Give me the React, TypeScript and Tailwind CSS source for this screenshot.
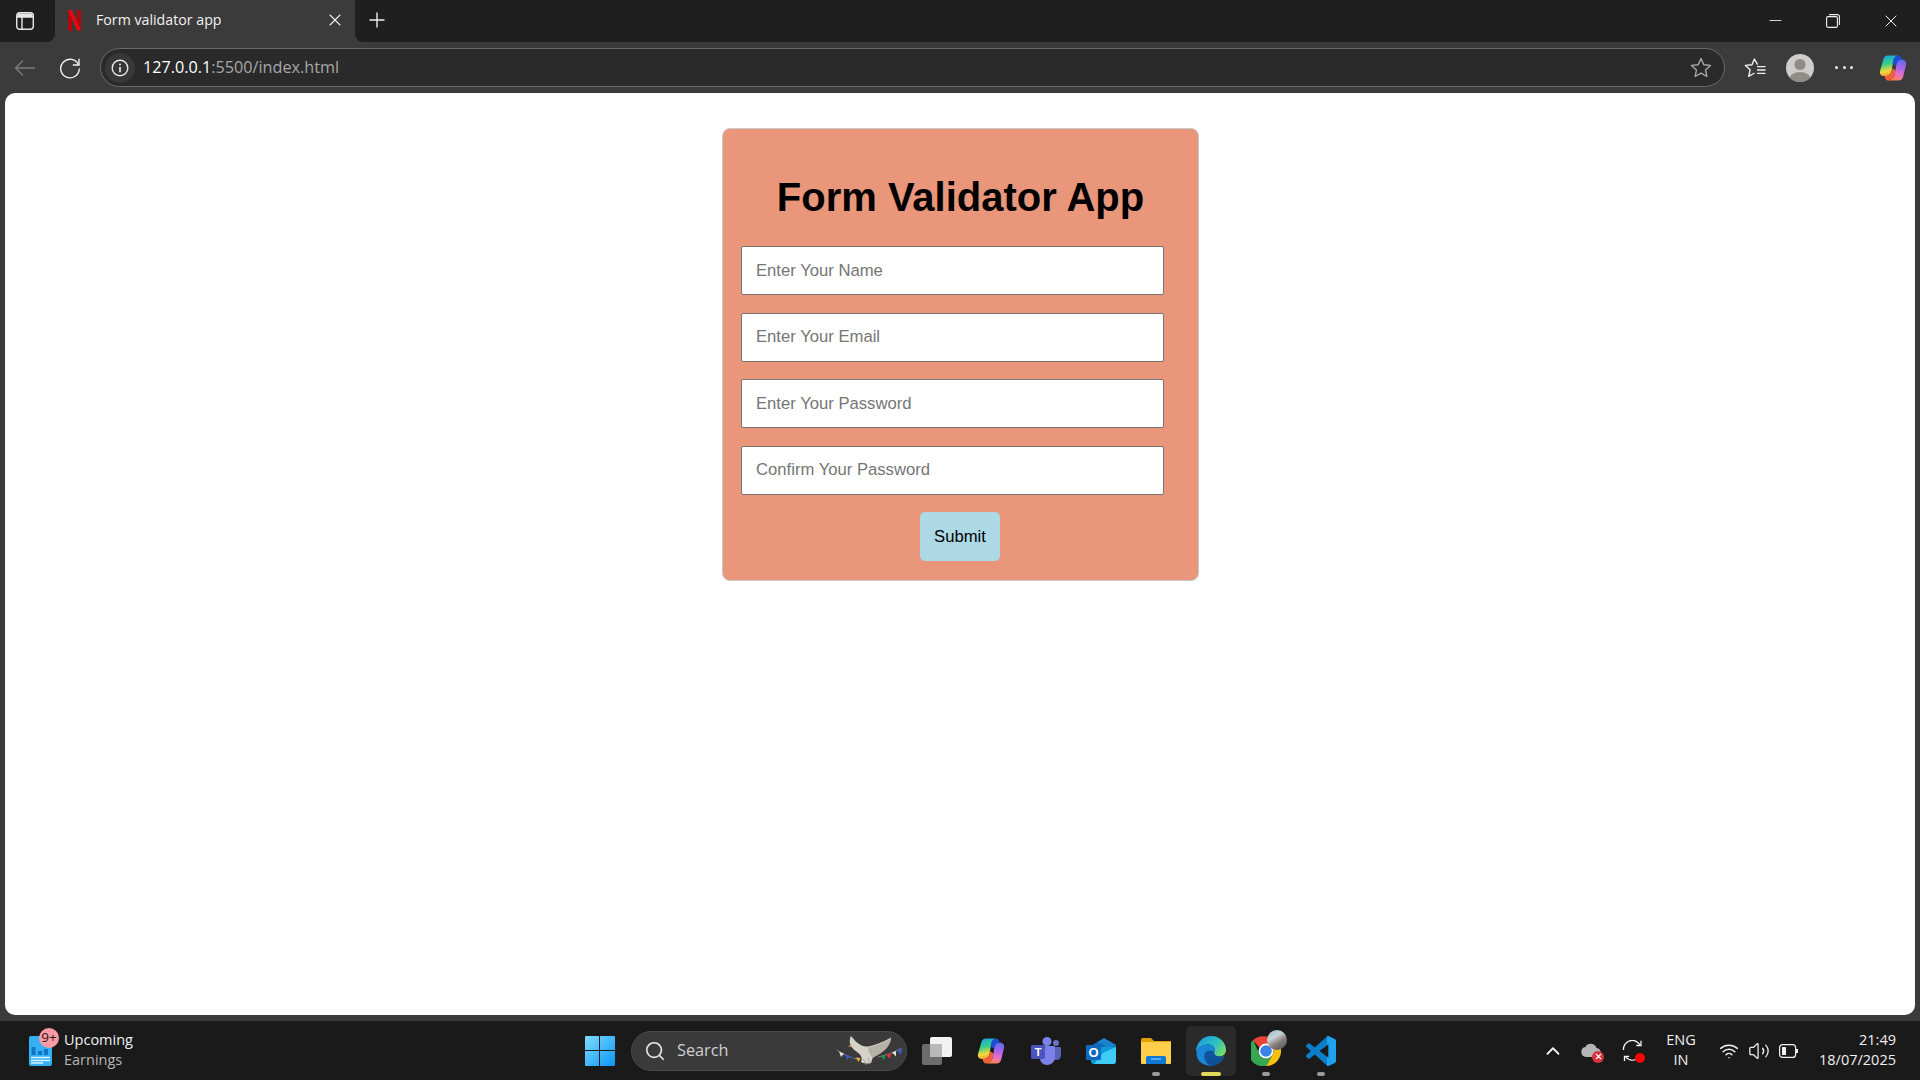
import { ChevronUp, Search, Wifi, Volume2, Plus, X, Minus } from "lucide-react";
import type { ReactNode } from "react";

const uiFont = "font-['Segoe_UI','Open_Sans','Noto_Sans',sans-serif]";

function SidebarIcon() {
    return (
        <svg width="18" height="18" viewBox="0 0 18 18" fill="none" stroke="#e8e8e8" strokeWidth="1.4">
            <rect x="0.7" y="0.7" width="16.6" height="16.6" rx="3" />
            <path d="M6 5v12.3M1 5h16" />
            <path d="M1.5 1.5h15v3.5h-15z" fill="#e8e8e8" stroke="none" />
        </svg>
    );
}

function NetflixIcon() {
    return (
        <svg width="13" height="21" viewBox="0 0 13 21">
            <path d="M0 0h4v21l-4 .0z" fill="#b20710" />
            <path d="M9 0h4v20.6l-4-.5z" fill="#b20710" />
            <path d="M0 0h4l9 20.8c-1.4-.2-2.8-.3-4-.4z" fill="#e50914" />
        </svg>
    );
}

function BackIcon() {
    return (
        <svg width="22" height="18" viewBox="0 0 22 18" fill="none" stroke="#7d7d7d" strokeWidth="1.3">
            <path d="M21 9H1.5M9 1.5 1.5 9 9 16.5" />
        </svg>
    );
}

function ReloadIcon() {
    return (
        <svg width="22" height="22" viewBox="0 0 22 22" fill="none" stroke="#f0f0f0" strokeWidth="1.4">
            <path d="M19.6 8A9.3 9.3 0 1 0 20.3 11.5" />
            <path d="M20 1.8V8h-6.2" />
        </svg>
    );
}

function InfoIcon() {
    return (
        <svg width="18" height="18" viewBox="0 0 18 18" fill="none" stroke="#e8e8e8" strokeWidth="1.4">
            <circle cx="9" cy="9" r="7.8" />
            <path d="M9 8v5.2" strokeWidth="1.7" />
            <circle cx="9" cy="5.4" r="1" fill="#e8e8e8" stroke="none" />
        </svg>
    );
}

function StarIcon() {
    return (
        <svg width="22" height="21" viewBox="0 0 22 21" fill="none" stroke="#a8a8a8" strokeWidth="1.4" strokeLinejoin="round">
            <path d="m11 1.5 2.8 6.2 6.7.7-5 4.5 1.4 6.6-5.9-3.4-5.9 3.4 1.4-6.6-5-4.5 6.7-.7z" />
        </svg>
    );
}

function FavoritesIcon() {
    return (
        <svg width="22" height="20" viewBox="0 0 22 20" fill="none" stroke="#f0f0f0" strokeWidth="1.4" strokeLinejoin="round">
            <path d="M13.6 6.6 10.4 1 8 6.7 1.4 7.4l4.7 4.4-1.4 6.6 5.8-3.4" />
            <path d="M13 8.6h8.5M13 12h8.5M13 15.4h8.5" />
        </svg>
    );
}

function ProfileIcon() {
    return (
        <svg width="28" height="28" viewBox="0 0 28 28">
            <clipPath id="profile-clip">
                <circle cx="14" cy="14" r="14" />
            </clipPath>
            <circle cx="14" cy="14" r="14" fill="#cfcdc9" />
            <g clipPath="url(#profile-clip)" fill="#8f8c88">
                <circle cx="14" cy="10.5" r="5.6" />
                <ellipse cx="14" cy="26" rx="11" ry="8" />
            </g>
        </svg>
    );
}

function CopilotIcon({ size, id }: { size: number; id: string }) {
    return (
        <svg width={size} height={size} viewBox="0 0 28 28">
            <defs>
                <linearGradient id={`${id}-a`} x1="0.3" y1="0" x2="0.5" y2="1">
                    <stop offset="0" stopColor="#1aa6e4" />
                    <stop offset="0.4" stopColor="#35d08a" />
                    <stop offset="0.75" stopColor="#f4d93a" />
                    <stop offset="1" stopColor="#f7923a" />
                </linearGradient>
                <linearGradient id={`${id}-b`} x1="0.6" y1="0" x2="0.4" y2="1">
                    <stop offset="0" stopColor="#5b6cf0" />
                    <stop offset="0.35" stopColor="#a464ec" />
                    <stop offset="0.7" stopColor="#ea70c6" />
                    <stop offset="1" stopColor="#f8844a" />
                </linearGradient>
            </defs>
            <path d="M9 1.500h10c-2.500.5-4 2.500-4.700 5L12.500 17c-.7 2.800-2 5-4.800 5H5C2 22 .3 19.800 1 17L4.300 5.500C5 3 6.500 1.500 9 1.500z" fill={`url(#${id}-a)`} />
            <path d="M9 26.500h10.500c2.500 0 4-1.500 4.700-4L27 11c.7-2.800-1-5.600-4-5.600h-1.400c-2 0-3.300 1.400-3.900 3.600L15.500 21c-.7 2.800-3 5-6.500 5.500z" fill={`url(#${id}-b)`} />
            <path d="M14.300 6.500C15 4 16.500 1.500 19 1.500c2 0 3.200 1.500 3.600 3.900h-1c-2 0-3.300 1.400-3.900 3.600l-.7 2.500-3.500-1.500z" fill="#1b4ed8" />
            <path d="M12.500 17l.8-2.800 3.100 2.400-.9 4.400c-.7 2.800-3 5-6.500 5.500-1.800 0-3-1.700-3.400-4.500h2.100c2.800 0 4.100-2.200 4.800-5z" fill="#f2603a" />
        </svg>
    );
}

function WidgetIcon() {
    return (
        <div className="relative h-[30px] w-[24px]">
            <svg width="24" height="30" viewBox="0 0 24 30" className="block">
                <rect width="23" height="30" rx="2" fill="#35b0f2" />
                <rect x="2.5" y="11" width="4" height="8" fill="#1276c8" />
                <rect x="9" y="15" width="4" height="4" fill="#1276c8" />
                <rect x="15" y="13" width="4" height="6" fill="#1276c8" />
                <path d="M2 21.5h19M2 24.5h19M2 27h12" stroke="#d9f2ff" strokeWidth="1.4" />
            </svg>
            <span className="absolute left-[10px] top-[-8px] flex h-[20px] w-[20px] items-center justify-center rounded-full bg-[#ff99a4] text-[13.5px] leading-none text-[#1a1a1a]">
                9+
            </span>
        </div>
    );
}

function WindowsLogo() {
    return (
        <svg width="30" height="30" viewBox="0 0 30 30">
            <defs>
                <linearGradient id="win-grad" x1="0" y1="0" x2="1" y2="1">
                    <stop offset="0" stopColor="#7fdcff" />
                    <stop offset="1" stopColor="#0a94f5" />
                </linearGradient>
            </defs>
            <path d="M1 0h13v14H0V1a1 1 0 0 1 1-1zM15 0h14a1 1 0 0 1 1 1v13H15zM0 15h14v15H1a1 1 0 0 1-1-1zM15 15h15v14a1 1 0 0 1-1 1H15z" fill="url(#win-grad)" />
        </svg>
    );
}

function DoveIcon() {
    return (
        <svg width="68" height="32" viewBox="0 0 68 32">
            <path d="M1 15Q14 24 24 24M42 22Q54 20 66 13" stroke="#b0b0b0" strokeWidth="0.6" fill="none" />
            <path d="M3 16.500 8 18.500 5 22z" fill="#e8dfce" />
            <path d="M9 19 14 21 11 25z" fill="#3a56c8" />
            <path d="M15 21 19 22 16.500 25.500z" fill="#3f3f80" />
            <path d="M20 22.500 24.500 23 22.500 27z" fill="#f0b429" />
            <path d="M14 8.500c-.5-3 0-6 1-7.500 2 2 3.500 4.500 6 6.500 3 2.500 7 4.500 11 4 7-1.500 15-4 23-9-.5 6-5 12-13 16.500-2 1-4 2-5 3l-2 6c-3 1-8 .5-10-1 1-2.500 1-5-1-7.500-3-3-8-5-10-10.500z" fill="#d5d2c8" />
            <path d="M32 12.500c7-1.500 15-4 23-9-.5 6-5 12-13 16.500-2 1-4 2-5 3-3-3-5-7-5-10.500z" fill="#b5b2a8" />
            <path d="M27 24c2 2 3 4 3 6M32 23c1 2 1 4 1 6" stroke="#9a978e" strokeWidth="0.8" fill="none" />
            <path d="M14.500 9.500l-2.500 2 3 .5z" fill="#e08a3c" />
            <path d="M45 21 49.500 20 48 25z" fill="#1c9c4c" />
            <path d="M50.500 19.500 55 18 54 24z" fill="#e03535" />
            <path d="M56 17.500 60 16 60 21.500z" fill="#e8dfce" />
            <path d="M61 15.500 66 13 65 20z" fill="#3a56c8" />
        </svg>
    );
}

function TaskViewIcon() {
    return (
        <svg width="30" height="28" viewBox="0 0 30 28">
            <rect x="0" y="7" width="20" height="21" rx="2" fill="#6c6c6c" />
            <rect x="8" y="0" width="22" height="20" rx="2" fill="#f2f2f2" />
            <rect x="8" y="7" width="12" height="13" fill="#b9b9b9" />
        </svg>
    );
}

function TeamsIcon() {
    return (
        <svg width="30" height="28" viewBox="0 0 30 28">
            <circle cx="25" cy="6" r="3" fill="#6c70c9" />
            <path d="M20 10h9a1 1 0 0 1 1 1v7c0 3-2 5-5 5-2 0-4-1-5-3z" fill="#5a5fb8" />
            <circle cx="16" cy="4.500" r="4.500" fill="#7b83eb" />
            <path d="M9 9h14a1 1 0 0 1 1 1v10c0 4-3 8-8 8-4 0-7-3-7-7z" fill="#7b83eb" />
            <rect x="0" y="8" width="14" height="14" rx="1.500" fill="#4b53bc" />
            <text x="7" y="19" textAnchor="middle" fontSize="11" fontWeight="700" fill="#fff" fontFamily="'Liberation Sans', sans-serif">
                T
            </text>
        </svg>
    );
}

function OutlookIcon() {
    return (
        <svg width="30" height="26" viewBox="0 0 30 26">
            <path d="M5 8 18 0l12 7v6H5z" fill="#0f6cbd" />
            <path d="M18 0l12 7-6 3L11 4z" fill="#28a8ea" opacity="0.4" />
            <path d="M5 9h25v14a3 3 0 0 1-3 3H8a3 3 0 0 1-3-3z" fill="#0f9bd8" />
            <path d="M17 15 30 9v14a3 3 0 0 1-3 3H8z" fill="#3ecbf5" />
            <rect x="0" y="7" width="15" height="15" rx="1" fill="#0e6abf" />
            <text x="7.500" y="19" textAnchor="middle" fontSize="13" fontWeight="700" fill="#fff" fontFamily="'Liberation Sans', sans-serif">
                O
            </text>
        </svg>
    );
}

function FolderIcon() {
    return (
        <svg width="30" height="26" viewBox="0 0 30 26">
            <path d="M0 2a2 2 0 0 1 2-2h8l3 3h17v6H0z" fill="#e0a100" />
            <path d="M0 4h30v21a1 1 0 0 1-1 1H1a1 1 0 0 1-1-1z" fill="#ffcf4a" />
            <path d="M5 26v-6a2 2 0 0 1 2-2h16a2 2 0 0 1 2 2v6z" fill="#0f78d4" />
            <path d="M10 21h10" stroke="#8fd0ff" strokeWidth="1.200" />
        </svg>
    );
}

function EdgeIcon() {
    return (
        <svg width="30" height="30" viewBox="0 0 30 30">
            <defs>
                <linearGradient id="edge-top" x1="0" y1="0.3" x2="1" y2="0.8">
                    <stop offset="0" stopColor="#1b9de2" />
                    <stop offset="0.55" stopColor="#2dc0c0" />
                    <stop offset="1" stopColor="#7fe05f" />
                </linearGradient>
                <linearGradient id="edge-low" x1="0" y1="0" x2="1" y2="1">
                    <stop offset="0" stopColor="#0c59a4" />
                    <stop offset="1" stopColor="#114a8b" />
                </linearGradient>
            </defs>
            <path d="M15 0C23.500 0 30 6.300 30 14c0 4-3 6.500-7 6.500-3 0-5.500-1-5.500-2.800 0-1 1.500-1.500 1.500-3.700 0-3-3-5.500-7-5.500-6 0-11.500 4-12.500 9C0 7 6.500 0 15 0z" fill="url(#edge-top)" />
            <path d="M.5 17.500C.5 11.500 6 8.500 12 8.500c4 0 7 2.500 7 5.500 0 1-.5 1.600-1 2.200-3.500-2.500-9-1.500-9.500 3-.4 3.800 2.500 8.800 8 10.400C7.500 30.500.5 25 .5 17.500z" fill="#1a86d8" />
            <path d="M8.500 19.200c.5-4.500 6-5.500 9.500-3 0 2.200 2.500 4.300 5.500 4.300 2 0 4.500-.6 5.500-2-1.300 6-6 11-13 11.500-4.500-.5-8-6-7.500-10.800z" fill="url(#edge-low)" />
        </svg>
    );
}

function ChromeIcon() {
    return (
        <div className="relative h-[30px] w-[30px]">
            <svg width="30" height="30" viewBox="0 0 30 30" className="block">
                <path d="M15 0a15 15 0 0 1 13 7.500H15a7.500 7.500 0 0 0-6.500 3.750L2 3.800A15 15 0 0 1 15 0z" fill="#ea4335" transform="translate(0 .5)" />
                <path d="M28 7.500A15 15 0 0 1 15 30l6.500-11.250A7.500 7.500 0 0 0 21.500 11.250 7.500 7.500 0 0 0 15 7.500z" fill="#f4c20d" />
                <path d="M2.300 4A15 15 0 0 0 15 30l6.500-11.250A7.500 7.500 0 0 1 8.500 18.750z" fill="#34a853" />
                <circle cx="15" cy="15" r="7.500" fill="#fff" />
                <circle cx="15" cy="15" r="5.800" fill="#3b82e8" />
            </svg>
            <span className="absolute right-[-6px] top-[-6px] h-[20px] w-[20px] rounded-full bg-[linear-gradient(150deg,#8fb6cc_0%,#c9d3d8_35%,#8a7f7c_60%,#3e4a58_100%)]" />
        </div>
    );
}

function VsCodeIcon() {
    return (
        <svg width="30" height="30" viewBox="0 0 100 100">
            <defs>
                <clipPath id="vsc-right">
                    <rect x="70" y="0" width="30" height="100" />
                </clipPath>
            </defs>
            <path
                d="M96.500 10.800 75.900.900a6.200 6.200 0 0 0-7.100 1.200L29.400 38 12.200 25a4.200 4.200 0 0 0-5.300.2l-5.500 5a4.200 4.200 0 0 0 0 6.200L16.300 50 1.400 63.600a4.200 4.200 0 0 0 0 6.200l5.500 5a4.200 4.200 0 0 0 5.300.2L29.400 62l39.400 35.900a6.200 6.200 0 0 0 7.100 1.200l20.600-9.900a6.200 6.200 0 0 0 3.500-5.600V16.400a6.200 6.200 0 0 0-3.500-5.600zM75 72.700 45.100 50 75 27.300z"
                fill="#0a7fc7"
            />
            <path
                d="M96.500 10.800 75.900.900a6.200 6.200 0 0 0-7.100 1.200L29.400 38 12.200 25a4.200 4.200 0 0 0-5.300.2l-5.500 5a4.200 4.200 0 0 0 0 6.200L16.300 50 1.400 63.600a4.200 4.200 0 0 0 0 6.200l5.500 5a4.200 4.200 0 0 0 5.300.2L29.400 62l39.400 35.900a6.200 6.200 0 0 0 7.100 1.200l20.600-9.900a6.200 6.200 0 0 0 3.500-5.600V16.400a6.200 6.200 0 0 0-3.500-5.600zM75 72.700 45.100 50 75 27.300z"
                fill="#1fa2ee"
                clipPath="url(#vsc-right)"
            />
        </svg>
    );
}

function CloudErrorIcon() {
    return (
        <div className="relative h-[18px] w-[22px]">
            <svg width="20" height="14" viewBox="0 0 20 14" className="mt-[1px] block">
                <path d="M5 14a5 5 0 0 1-.6-9.900A6 6 0 0 1 15.500 5 4.500 4.500 0 0 1 15 14z" fill="#b5b5b5" />
            </svg>
            <span className="absolute bottom-[-3px] right-[-1px] flex h-[12px] w-[12px] items-center justify-center rounded-full bg-[#d6313d]">
                <X size={9} strokeWidth={3} className="text-white" />
            </span>
        </div>
    );
}

function SyncIcon() {
    return (
        <div className="relative h-[22px] w-[22px]">
            <svg width="22" height="22" viewBox="0 0 22 22" fill="none" stroke="#f4f4f4" strokeWidth="1.300" className="block">
                <path d="M1.500 10A8.800 8.800 0 0 1 18 5" />
                <path d="M19 .8v4.700h-4.700" />
                <path d="M14 19.500A8.800 8.800 0 0 1 3.500 16.500" />
                <path d="M2.500 21v-4.700h4.700" />
            </svg>
            <span className="absolute bottom-[-1px] right-[-1px] h-[10px] w-[10px] rounded-full bg-[#ff0000]" />
        </div>
    );
}

function BatteryIcon() {
    return (
        <svg width="20" height="14" viewBox="0 0 20 14" fill="none" stroke="#f0f0f0" strokeWidth="1.200">
            <rect x="0.600" y="0.600" width="16" height="12.800" rx="3" />
            <rect x="3" y="3" width="4" height="8" fill="#f0f0f0" stroke="none" rx="0.500" />
            <path d="M18 5v4" strokeWidth="2" />
        </svg>
    );
}

function FormField({ placeholder }: { placeholder: string }) {
    return (
        <input
            type="text"
            placeholder={placeholder}
            className="box-border h-[49px] w-[423px] rounded-[2px] border border-[#767676] bg-white pl-[14px] font-['Liberation_Sans',sans-serif] text-[16.67px] text-black placeholder:text-[#757575]"
        />
    );
}

function TaskbarSlot({ children, active, mark }: { children: ReactNode; active?: boolean; mark?: boolean }) {
    return (
        <div className={`relative flex h-[50px] w-[50px] shrink-0 items-center justify-center rounded-[5px] ${active ? "bg-[#2a2a2a]" : ""}`}>
            {children}
            {mark && <span className="absolute bottom-[0px] left-[21px] h-[4px] w-[8px] rounded-full bg-[#9a9a9a]" />}
            {active && <span className="absolute bottom-[0px] left-[15px] h-[4px] w-[20px] rounded-full bg-[#e3d95a]" />}
        </div>
    );
}

export default function App() {
    return (
        <div className={`flex h-screen w-[1920px] flex-col overflow-hidden bg-[#3b3b3b] ${uiFont}`}>
            {/* title bar */}
            <div className="flex h-[42px] shrink-0 items-stretch">
                <div className="flex w-[55px] shrink-0 items-center rounded-br-[8px] bg-[#1f1f1f] pl-[16px]">
                    <SidebarIcon />
                </div>
                <div className="flex h-[42px] w-[300px] shrink-0 items-center rounded-t-[10px] bg-[#3b3b3b] pb-[2px]">
                    <div className="ml-[13px] flex w-[28px] shrink-0 items-center">
                        <NetflixIcon />
                    </div>
                    <span className="w-[229px] text-[14.2px] text-[#f2f2f2]">Form validator app</span>
                    <X size={20} strokeWidth={1.4} className="text-[#e8e8e8]" />
                </div>
                <div className="flex flex-1 items-center rounded-bl-[8px] bg-[#1f1f1f] pb-[2px]">
                    <Plus size={24} strokeWidth={1.4} className="ml-[10px] text-[#f0f0f0]" />
                    <div className="ml-auto mr-[19px] mt-[2px] flex items-center text-[#f0f0f0]">
                        <Minus size={19} strokeWidth={1.1} className="mr-[41px] mt-[-2px]" />
                        <svg width="14" height="14" viewBox="0 0 14 14" fill="none" stroke="#f0f0f0" strokeWidth="1.100" className="mr-[41px]">
                            <rect x="0.600" y="2.600" width="10.800" height="10.800" rx="1.500" />
                            <path d="M3 .6h8.400a2 2 0 0 1 2 2V11" />
                        </svg>
                        <X size={20} strokeWidth={1.2} />
                    </div>
                </div>
            </div>

            {/* address bar */}
            <div className="flex h-[51px] shrink-0 items-center">
                <div className="ml-[14px] flex w-[45px] shrink-0">
                    <BackIcon />
                </div>
                <div className="flex w-[41px] shrink-0">
                    <ReloadIcon />
                </div>
                <div className="flex h-[39px] w-[1625px] shrink-0 items-center rounded-full border border-[#6a6a6a] bg-[#2a2a2a]">
                    <div className="ml-[4px] flex h-[30px] w-[30px] items-center justify-center rounded-full bg-[#383838]">
                        <InfoIcon />
                    </div>
                    <span className="ml-[8px] text-[16.2px] text-white">
                        127.0.0.1<span className="text-[#a8a8a8]">:5500/index.html</span>
                    </span>
                    <div className="ml-auto mr-[12px] flex">
                        <StarIcon />
                    </div>
                </div>
                <div className="ml-[19px] flex items-center">
                    <FavoritesIcon />
                    <div className="ml-[20px] flex">
                        <ProfileIcon />
                    </div>
                    <div className="ml-[21px] flex w-[18px] justify-between">
                        <span className="h-[3px] w-[3px] rounded-full bg-[#f0f0f0]" />
                        <span className="h-[3px] w-[3px] rounded-full bg-[#f0f0f0]" />
                        <span className="h-[3px] w-[3px] rounded-full bg-[#f0f0f0]" />
                    </div>
                    <div className="ml-[26px] flex">
                        <CopilotIcon size={28} id="copilot-bar" />
                    </div>
                </div>
            </div>

            {/* page */}
            <div className="mx-[5px] h-[922px] shrink-0 rounded-[10px] bg-white pt-[35px] font-['Liberation_Sans',sans-serif]">
                <form className="ml-[717px] flex w-[477px] flex-col rounded-[8px] border border-[#c9c9c9] bg-[#e9967a] pb-[19px] pl-[18px] pt-[45px]">
                    <h1 className="mb-[26px] ml-[-18px] text-center text-[40px] font-bold leading-[46px] text-black">Form Validator App</h1>
                    <div className="flex flex-col gap-[17.67px]">
                        <FormField placeholder="Enter Your Name" />
                        <FormField placeholder="Enter Your Email" />
                        <FormField placeholder="Enter Your Password" />
                        <FormField placeholder="Confirm Your Password" />
                    </div>
                    <button
                        type="button"
                        className="ml-[179px] mt-[16.67px] h-[49px] w-[80px] rounded-[5px] bg-[#add8e6] text-[16.67px] text-black"
                    >
                        Submit
                    </button>
                </form>
            </div>

            {/* taskbar */}
            <div className="mt-[6px] flex h-[59px] shrink-0 items-center bg-[#1a1a1a]">
                <div className="ml-[29px] flex w-[556px] shrink-0 items-center">
                    <WidgetIcon />
                    <div className="ml-[11px] mt-[-2px] flex flex-col text-[14.5px] leading-[20px]">
                        <span className="text-[#f0f0f0]">Upcoming</span>
                        <span className="text-[#b8b8b8]">Earnings</span>
                    </div>
                </div>
                <WindowsLogo />
                <div className="ml-[16px] flex h-[40px] w-[276px] shrink-0 items-center rounded-full border border-[#4a4a4a] bg-[#3a3a3a]">
                    <Search size={22} strokeWidth={1.8} className="ml-[12px] text-[#e8e8e8]" />
                    <span className="ml-[11px] text-[16.3px] text-[#d0d0d0]">Search</span>
                    <div className="ml-auto mr-[2px] flex">
                        <DoveIcon />
                    </div>
                </div>
                <div className="ml-[14px] flex shrink-0 items-center">
                    <div className="mr-[14px] flex h-[50px] w-[31px] items-center justify-center">
                        <TaskViewIcon />
                    </div>
                    <div className="flex gap-[5px]">
                        <TaskbarSlot>
                            <CopilotIcon size={28} id="copilot-task" />
                        </TaskbarSlot>
                        <TaskbarSlot>
                            <TeamsIcon />
                        </TaskbarSlot>
                        <TaskbarSlot>
                            <OutlookIcon />
                        </TaskbarSlot>
                        <TaskbarSlot mark>
                            <FolderIcon />
                        </TaskbarSlot>
                        <TaskbarSlot active>
                            <EdgeIcon />
                        </TaskbarSlot>
                        <TaskbarSlot mark>
                            <ChromeIcon />
                        </TaskbarSlot>
                        <TaskbarSlot mark>
                            <VsCodeIcon />
                        </TaskbarSlot>
                    </div>
                </div>
                <div className="ml-auto mr-[24px] flex items-center text-[#f0f0f0]">
                    <ChevronUp size={22} strokeWidth={2} />
                    <div className="ml-[17px] flex">
                        <CloudErrorIcon />
                    </div>
                    <div className="ml-[19px] flex">
                        <SyncIcon />
                    </div>
                    <div className="ml-[17px] mt-[-2px] flex w-[40px] flex-col items-center text-[14.5px] leading-[20px]">
                        <span>ENG</span>
                        <span>IN</span>
                    </div>
                    <Wifi size={20} strokeWidth={1.8} className="ml-[18px]" />
                    <Volume2 size={22} strokeWidth={1.4} className="ml-[9px]" />
                    <div className="ml-[9px] flex">
                        <BatteryIcon />
                    </div>
                    <div className="ml-[20px] mt-[-2px] flex flex-col items-end text-[14.5px] leading-[20px]">
                        <span>21:49</span>
                        <span>18/07/2025</span>
                    </div>
                </div>
            </div>
        </div>
    );
}
